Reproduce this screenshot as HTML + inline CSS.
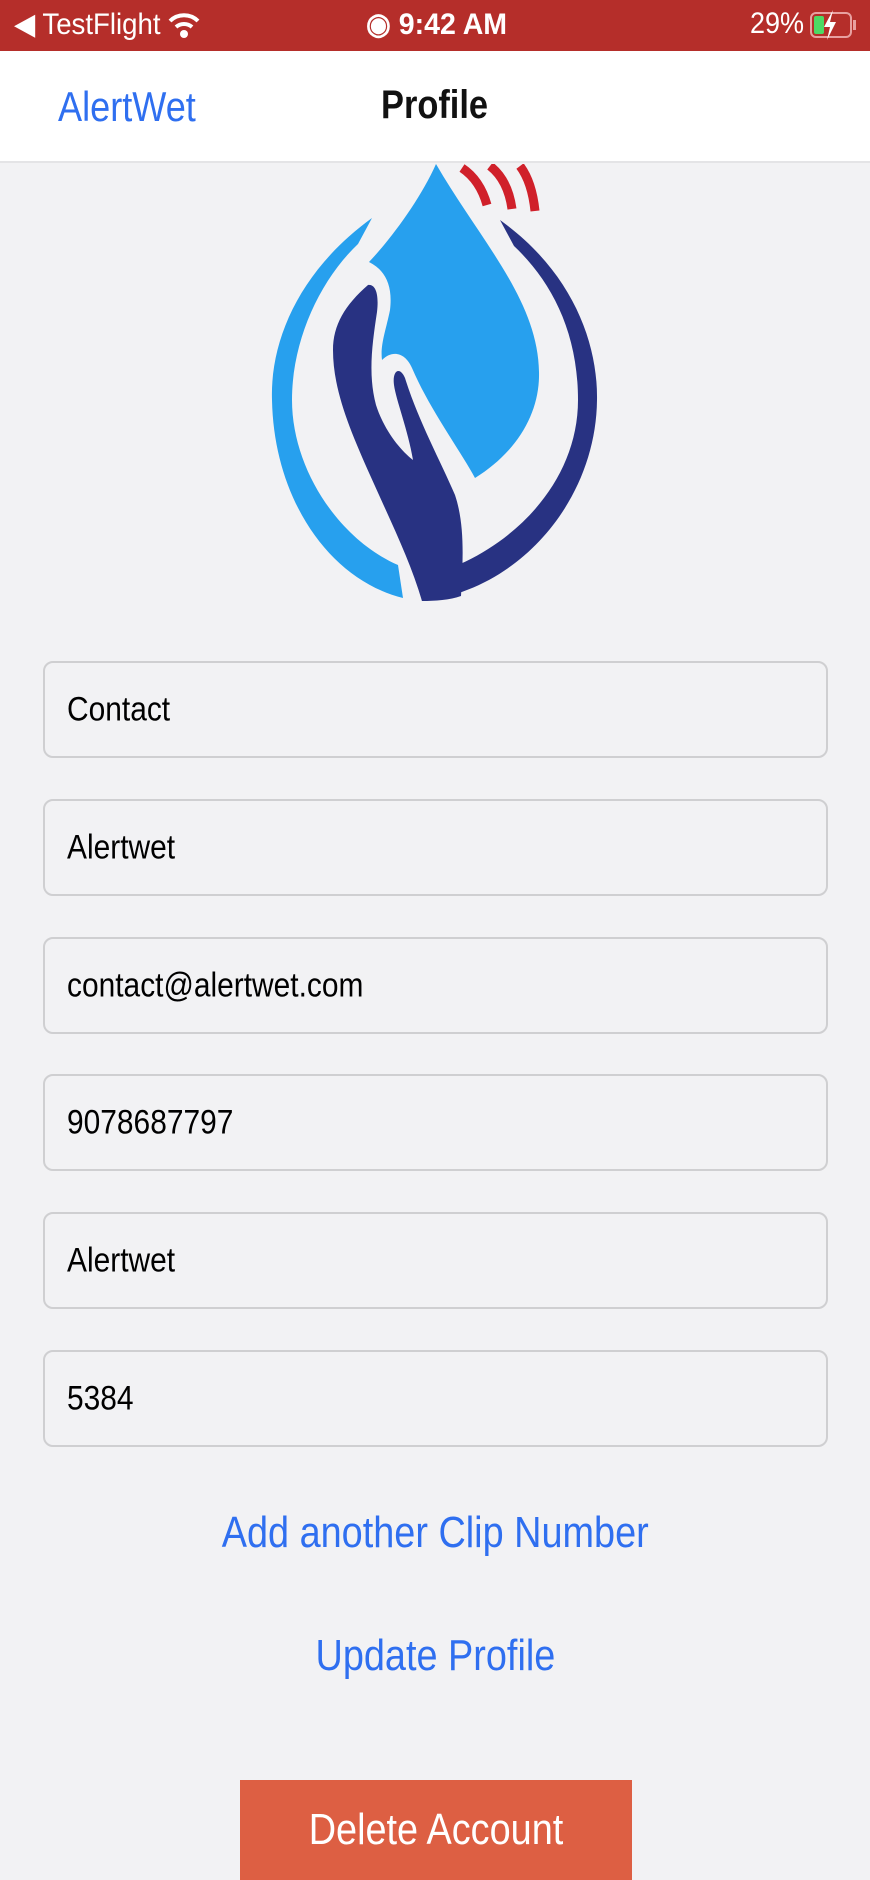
<!DOCTYPE html>
<html><head><meta charset="utf-8"><style>
*{margin:0;padding:0;box-sizing:border-box}
html,body{width:870px;height:1880px;overflow:hidden;background:#f2f2f4;font-family:"Liberation Sans",sans-serif}
.sb{position:absolute;left:0;top:0;width:870px;height:51px;background:#b52e2a;color:#fff;font-size:30px}
.nav{position:absolute;left:0;top:51px;width:870px;height:112px;background:#fff;border-bottom:2px solid #e4e4e6}
.t{position:absolute;white-space:nowrap;transform-origin:left center}
.f{position:absolute;left:43px;width:785px;height:97px;border:2px solid #cfcfd1;border-radius:10px;background:#f2f2f4}
.f span{position:absolute;left:22px;top:50%;transform:translateY(-50%) scaleX(0.88);transform-origin:left center;font-size:34px;color:#000}
.c{position:absolute;left:0;width:870px;text-align:center;color:#2f6ff0;font-size:44px}
.c span{display:inline-block;transform:scaleX(0.86)}
</style></head><body>
<div class="sb">
 <div class="t" style="left:14px;top:7px;transform:scaleX(0.92)">&#9664; TestFlight</div>
 <svg style="position:absolute;left:168px;top:11px" width="32" height="28" viewBox="0 0 32 28"><path d="M2 10 A20 20 0 0 1 30 10" stroke="#fff" stroke-width="4" fill="none"/><path d="M8 16 A12 12 0 0 1 24 16" stroke="#fff" stroke-width="4" fill="none"/><circle cx="16" cy="23" r="4" fill="#fff"/></svg>
 <div class="t" style="left:366px;top:7px;font-weight:bold;transform:scaleX(0.95)">&#9673; 9:42 AM</div>
 <div class="t" style="left:750px;top:7px;transform:scaleX(0.9)">29%</div>
 <div style="position:absolute;left:810px;top:12px;width:42px;height:26px;border:2px solid #e8a0a0;border-radius:6px"><div style="position:absolute;left:2px;top:2px;width:10px;height:18px;background:#4cd964;border-radius:2px"></div></div>
 <div style="position:absolute;left:853px;top:20px;width:3px;height:10px;background:#e8a0a0"></div>
 <svg style="position:absolute;left:820px;top:9px" width="20" height="32" viewBox="0 0 20 32"><path d="M13 1 L4 18 H10 L7 31 L16 13 H10 Z" fill="#fff"/></svg>
</div>
<div class="nav">
 <div class="t" style="left:58px;top:32px;font-size:42px;color:#2f6ff0;transform:scaleX(0.86)">AlertWet</div>
 <div class="t" style="left:381px;top:32px;font-size:40px;font-weight:bold;color:#111;transform:scaleX(0.86)">Profile</div>
</div>
<svg style="position:absolute;left:0;top:164px" width="870" height="440" viewBox="0 164 870 440">
 <path d="M462 168 Q480 180 487 205" stroke="#d0202a" stroke-width="9" fill="none"/>
 <path d="M490 166 Q508 180 512 209" stroke="#d0202a" stroke-width="9" fill="none"/>
 <path d="M520 166 Q532 182 535 211" stroke="#d0202a" stroke-width="9" fill="none"/>
 <path d="M372 218 C300 270 270 340 272 400 C274 500 330 580 403 598 L398 565 C340 540 292 470 292 400 C292 340 320 280 358 244 Z" fill="#27a0ee"/>
 <path d="M500 220 C570 270 598 340 597 400 C596 500 520 590 422 601 L418 578 C500 560 578 490 578 400 C578 330 550 280 514 246 Z" fill="#283282"/>
 <path d="M436 164 C420 200 390 240 369 262 C385 270 393 285 390 310 C386 330 380 345 382 360 C392 350 405 352 412 368 C430 410 460 450 475 478 C520 450 540 410 539 372 C538 300 480 240 436 164 Z" fill="#27a0ee"/>
 <path d="M368 285 C376 284 379 295 377 312 C372 345 368 375 376 405 C384 430 400 450 413 460 C408 430 396 400 394 385 C392 370 400 366 405 378 C418 420 440 460 455 495 C465 525 463 560 461 596 C450 600 435 601 422 601 C410 560 390 520 370 475 C350 430 333 390 333 350 C333 325 345 305 368 285 Z" fill="#283282"/>
</svg>
<div class="f" style="top:661px"><span>Contact</span></div>
<div class="f" style="top:799px"><span>Alertwet</span></div>
<div class="f" style="top:937px"><span>contact@alertwet.com</span></div>
<div class="f" style="top:1074px"><span>9078687797</span></div>
<div class="f" style="top:1212px"><span>Alertwet</span></div>
<div class="f" style="top:1350px"><span>5384</span></div>
<div class="c" style="top:1508px"><span>Add another Clip Number</span></div>
<div class="c" style="top:1631px"><span>Update Profile</span></div>
<div style="position:absolute;left:240px;top:1780px;width:392px;height:100px;background:#dd5f43;color:#fff;font-size:44px;text-align:center;line-height:100px"><span style="display:inline-block;transform:scaleX(0.86)">Delete Account</span></div>
</body></html>
